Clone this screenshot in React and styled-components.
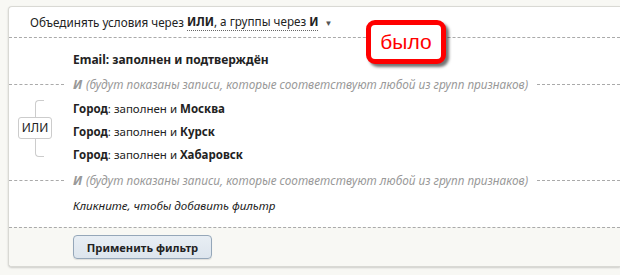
import React from 'react'
import styled, { createGlobalStyle } from 'styled-components'

const GlobalStyle = createGlobalStyle`
body {
  margin: 0;
  background: #f8f8f4;
  font-family: "Noto Sans", "Open Sans", sans-serif;
  font-size: 12px;
  color: #222;
}
`

const Page = styled.div`
  position: relative;
  padding: 6px 0 0 8px;
  height: 269px;
`

const Card = styled.div`
  background: #fff;
  border: 1px solid #d9d9d4;
  border-right: none;
  border-radius: 4px 0 0 4px;
  box-shadow: 0 1px 2px rgba(0, 0, 0, 0.18);
  overflow: hidden;
`

const Header = styled.div`
  height: 30px;
  display: flex;
  align-items: center;
  padding-left: 21px;
  border-bottom: 1px dashed #aaa;
  font-size: 11.7px;
`

const Link = styled.span`
  border-bottom: 1px dotted #666;
  padding-bottom: 1px;
`

const Caret = styled.span`
  font-size: 8px;
  color: #555;
  margin-left: 6px;
`

const Body = styled.div`
  padding: 10px 0 10px 0;
`

const Row = styled.div`
  height: 23px;
  display: flex;
  align-items: center;
  padding-left: 64px;
  font-size: ${p => (p.$italic ? 11.6 : 12)}px;
  font-weight: ${p => (p.$bold ? 700 : 400)};
  font-style: ${p => (p.$italic ? 'italic' : 'normal')};
`

const Sep = styled.div`
  height: ${p => p.$h}px;
  display: flex;
  align-items: center;
  color: #999;
  &::before, &::after {
    content: '';
    border-top: 1px dashed #aaa;
  }
  &::before {
    width: 55px;
    margin-right: 9px;
  }
  &::after {
    flex: 1;
    margin-left: 9px;
  }
`

const SepWord = styled.span`
  font-weight: 700;
  font-style: italic;
  font-size: 13px;
  margin-right: 4px;
`

const SepNote = styled.span`
  font-style: italic;
  font-size: 11.8px;
`

const Group = styled.div`
  display: flex;
`

const BracketCol = styled.div`
  position: relative;
  width: 64px;
  display: flex;
  align-items: center;
  &::before {
    content: '';
    position: absolute;
    left: 26px;
    top: 3px;
    bottom: 9px;
    width: 8px;
    border: 1px solid #ccc;
    border-right: none;
    border-radius: 4px 0 0 4px;
  }
`

const OrBadge = styled.span`
  position: relative;
  margin-left: 9px;
  margin-top: -8px;
  width: 32px;
  height: 20px;
  display: flex;
  align-items: center;
  justify-content: center;
  background: #fff;
  border: 1px solid #ccc;
  border-radius: 3px;
  font-size: 12px;
`

const GroupRows = styled.div`
  display: flex;
  flex-direction: column;
`

const CondRow = styled.div`
  height: 23px;
  display: flex;
  align-items: center;
  font-size: 11.5px;
`

const Footer = styled.div`
  background: #f8f8f4;
  border-top: 1px dashed #aaa;
  padding: 7px 0 7px 64px;
`

const ApplyButton = styled.button`
  width: 139px;
  height: 24px;
  border: 1px solid #95a7b9;
  border-radius: 4px;
  background: linear-gradient(#e8eef4, #dde5ed);
  font-family: inherit;
  font-size: 11.2px;
  font-weight: 700;
  color: #222;
  box-shadow: 0 1px 1px rgba(0, 0, 0, 0.1);
`

const Note = styled.div`
  position: absolute;
  left: 366px;
  top: 20px;
  width: 70px;
  height: 34px;
  border: 5px solid #f00;
  border-radius: 9px;
  background: #fff;
  box-shadow: 3px 3px 3px rgba(0, 0, 0, 0.55);
  display: flex;
  align-items: center;
  justify-content: center;
  font-family: "Liberation Sans", Arial, sans-serif;
  font-size: 21px;
  color: #f00;
`

const Separator = ({ h }) => (
  <Sep $h={h}>
    <SepWord>И</SepWord>
    <SepNote>(будут показаны записи, которые соответствуют любой из групп признаков)</SepNote>
  </Sep>
)

const cities = ['Москва', 'Курск', 'Хабаровск']

export default function App() {
  return (
    <Page>
      <GlobalStyle />
      <Card>
        <Header>
          Объединять условия через&nbsp;
          <Link><b>ИЛИ</b>, а группы через <b>И</b></Link>
          <Caret>▼</Caret>
        </Header>
        <Body>
          <Row $bold>Email: заполнен и подтверждён</Row>
          <Separator h={26} />
          <Group>
            <BracketCol>
              <OrBadge>ИЛИ</OrBadge>
            </BracketCol>
            <GroupRows>
              {cities.map(c => (
                <CondRow key={c}>
                  <b>Город</b>: заполнен и&nbsp;<b>{c}</b>
                </CondRow>
              ))}
            </GroupRows>
          </Group>
          <Separator h={28} />
          <Row $italic>Кликните, чтобы добавить фильтр</Row>
        </Body>
        <Footer>
          <ApplyButton>Применить фильтр</ApplyButton>
        </Footer>
      </Card>
      <Note>было</Note>
    </Page>
  )
}
